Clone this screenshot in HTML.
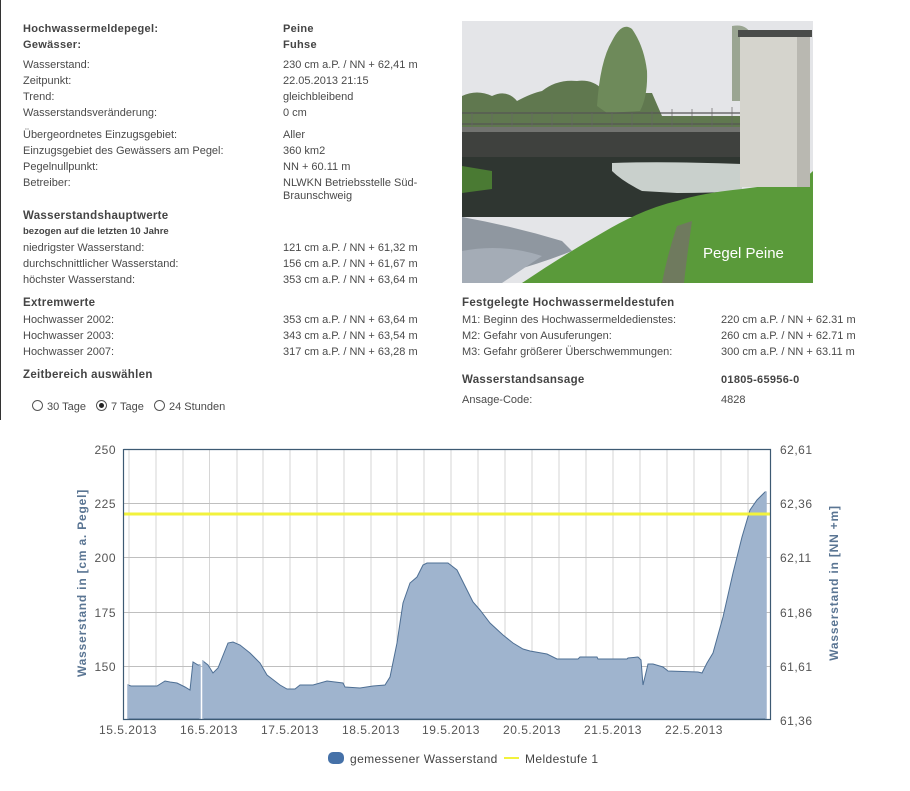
<!DOCTYPE html>
<html><head><meta charset="utf-8">
<style>
body{margin:0;background:#fff;width:910px;height:791px;position:relative;overflow:hidden;font-family:"Liberation Sans",Arial,sans-serif;font-size:11px;color:#4a4a4a}
.t{position:absolute;line-height:14px;white-space:nowrap}
.b{font-weight:bold;color:#444;letter-spacing:0.3px}
.h{font-weight:bold;color:#444;font-size:11.5px;letter-spacing:0.3px}
.s{font-weight:bold;font-size:9.5px;color:#444}
.r{position:absolute;width:11px;height:11px;border:1px solid #555;border-radius:50%;box-sizing:border-box;background:#fff}
</style></head><body>
<div style="position:absolute;left:0;top:0;width:1px;height:420px;background:#333"></div>

<div class="t b" style="left:23px;top:22px">Hochwassermeldepegel:</div><div class="t b" style="left:283px;top:22px">Peine</div>
<div class="t b" style="left:23px;top:38px">Gewässer:</div><div class="t b" style="left:283px;top:38px">Fuhse</div>
<div class="t" style="left:23px;top:58px">Wasserstand:</div><div class="t" style="left:283px;top:58px">230 cm a.P. / NN + 62,41 m</div>
<div class="t" style="left:23px;top:74px">Zeitpunkt:</div><div class="t" style="left:283px;top:74px">22.05.2013 21:15</div>
<div class="t" style="left:23px;top:90px">Trend:</div><div class="t" style="left:283px;top:90px">gleichbleibend</div>
<div class="t" style="left:23px;top:106px">Wasserstandsveränderung:</div><div class="t" style="left:283px;top:106px">0 cm</div>
<div class="t" style="left:23px;top:128px">Übergeordnetes Einzugsgebiet:</div><div class="t" style="left:283px;top:128px">Aller</div>
<div class="t" style="left:23px;top:144px">Einzugsgebiet des Gewässers am Pegel:</div><div class="t" style="left:283px;top:144px">360 km2</div>
<div class="t" style="left:23px;top:160px">Pegelnullpunkt:</div><div class="t" style="left:283px;top:160px">NN + 60.11 m</div>
<div class="t" style="left:23px;top:176px">Betreiber:</div><div class="t" style="left:283px;top:176px">NLWKN Betriebsstelle Süd-</div>
<div class="t" style="left:283px;top:189px">Braunschweig</div>
<div class="t h" style="left:23px;top:209px">Wasserstandshauptwerte</div>
<div class="t s" style="left:23px;top:225px">bezogen auf die letzten 10 Jahre</div>
<div class="t" style="left:23px;top:241px">niedrigster Wasserstand:</div><div class="t" style="left:283px;top:241px">121 cm a.P. / NN + 61,32 m</div>
<div class="t" style="left:23px;top:257px">durchschnittlicher Wasserstand:</div><div class="t" style="left:283px;top:257px">156 cm a.P. / NN + 61,67 m</div>
<div class="t" style="left:23px;top:273px">höchster Wasserstand:</div><div class="t" style="left:283px;top:273px">353 cm a.P. / NN + 63,64 m</div>
<div class="t h" style="left:23px;top:296px">Extremwerte</div>
<div class="t" style="left:23px;top:313px">Hochwasser 2002:</div><div class="t" style="left:283px;top:313px">353 cm a.P. / NN + 63,64 m</div>
<div class="t" style="left:23px;top:329px">Hochwasser 2003:</div><div class="t" style="left:283px;top:329px">343 cm a.P. / NN + 63,54 m</div>
<div class="t" style="left:23px;top:345px">Hochwasser 2007:</div><div class="t" style="left:283px;top:345px">317 cm a.P. / NN + 63,28 m</div>
<div class="t h" style="left:23px;top:368px">Zeitbereich auswählen</div>

<div class="r" style="left:32px;top:400px"></div><div class="t" style="left:47px;top:400px">30 Tage</div>
<div class="r" style="left:96px;top:400px"><div style="position:absolute;left:2px;top:2px;width:5px;height:5px;border-radius:50%;background:#222"></div></div><div class="t" style="left:111px;top:400px">7 Tage</div>
<div class="r" style="left:154px;top:400px"></div><div class="t" style="left:169px;top:400px">24 Stunden</div>

<div class="t h" style="left:462px;top:296px">Festgelegte Hochwassermeldestufen</div>
<div class="t" style="left:462px;top:313px">M1: Beginn des Hochwassermeldedienstes:</div><div class="t" style="left:721px;top:313px">220 cm a.P. / NN + 62.31 m</div>
<div class="t" style="left:462px;top:329px">M2: Gefahr von Ausuferungen:</div><div class="t" style="left:721px;top:329px">260 cm a.P. / NN + 62.71 m</div>
<div class="t" style="left:462px;top:345px">M3: Gefahr größerer Überschwemmungen:</div><div class="t" style="left:721px;top:345px">300 cm a.P. / NN + 63.11 m</div>
<div class="t h" style="left:462px;top:373px">Wasserstandsansage</div><div class="t b" style="left:721px;top:373px">01805-65956-0</div>
<div class="t" style="left:462px;top:393px">Ansage-Code:</div><div class="t" style="left:721px;top:393px">4828</div>

<svg style="position:absolute;left:462px;top:21px" width="351" height="262" viewBox="0 0 351 262">
<rect width="351" height="262" fill="#e4e5e8"/>
<path d="M0 75 Q15 68 30 75 Q45 68 55 80 Q70 72 80 70 Q95 58 115 60 Q130 58 140 68 L150 72 L190 72 L200 95 L280 95 L280 110 L0 110Z" fill="#60784f"/>
<path d="M135 85 Q138 40 150 20 Q160 0 170 8 Q182 25 185 50 Q186 75 178 90 L145 92Z" fill="#6e8a5a"/>
<path d="M270 5 Q285 2 290 15 L290 80 L270 80Z" fill="#9aa592"/>
<path d="M0 92 H280 M0 103 H280" stroke="#555" stroke-width="1.2"/>
<g stroke="#666" stroke-width="0.7"><path d="M10 92V106M30 92V106M50 92V106M70 92V106M90 92V106M110 92V106M130 92V106M150 92V106M170 92V106M190 90V106M210 88V106M230 88V106M250 87V106M270 86V106"/></g>
<rect x="0" y="106" width="280" height="30" fill="#3f413e"/>
<rect x="0" y="106" width="280" height="5" fill="#727370"/>
<rect x="0" y="136" width="280" height="60" fill="#2f3631"/>
<path d="M150 142 Q200 140 280 143 V170 Q250 172 215 172 L180 170 Q160 160 150 150Z" fill="#c9d0cc"/>
<path d="M0 145 L30 150 L30 168 L0 172Z" fill="#4a7a33"/>
<path d="M0 196 Q50 205 100 220 L110 230 Q60 250 0 262Z" fill="#8f97a0"/>
<path d="M0 230 Q40 222 80 235 L40 262 H0Z" fill="#a4acb6"/>
<path d="M60 262 Q100 235 140 212 Q180 188 215 180 Q240 172 280 168 L340 160 L351 150 V262Z" fill="#5a9a3a"/>
<path d="M200 262 Q205 235 215 205 L230 200 Q225 235 222 262Z" fill="#6f7a5e"/>
<rect x="278" y="11" width="70" height="155" fill="#d5d4cd"/>
<rect x="276" y="9" width="74" height="7" fill="#4a4c4a"/>
<rect x="335" y="16" width="13" height="150" fill="#b9b8b1"/>
<text x="241" y="237" font-family="Liberation Sans,Arial,sans-serif" font-size="15" fill="#fff">Pegel Peine</text>
</svg>

<svg style="position:absolute;left:0;top:430px" width="910" height="361" viewBox="0 430 910 361">
<g stroke="#d6d6d6" stroke-width="1">
<path d="M129 449V719M156 449V719M183 449V719M209.5 449V719M237 449V719M263 449V719M290 449V719M317 449V719M344 449V719M371 449V719M397 449V719M424 449V719M451 449V719M478 449V719M505 449V719M532 449V719M559 449V719M586 449V719M613 449V719M640 449V719M667 449V719M694 449V719M721 449V719M748 449V719"/>
</g>
<g stroke="#bfbfbf" stroke-width="1"><path d="M123 503.5H771M123 557.5H771M123 612.5H771M123 666.5H771"/></g>
<path d="M128 719 V685 L131 686 L157 686 L165 681 L170 682 L177 683 L185 687 L190 690 L193 662 L198 665 L200 665 V719Z M203 719 V661 L208 665 L213 673 L218 668 L228 643 L233 642 L240 645 L250 653 L260 663 L267 675 L280 685 L287 689 L295 689 L300 685 L313 685 L327 681 L343 683 L345 687 L360 688 L373 686 L385 685 L390 677 L397 643 L403 603 L410 583 L417 577 L423 565 L427 563 L448 563 L457 570 L467 590 L473 602 L480 610 L490 623 L503 635 L513 643 L523 649 L530 651 L547 654 L557 659 L578 659 L580 657 L597 657 L598 659 L627 659 L628 658 L638 657 L641 660 L643 685 L648 664 L653 664 L663 667 L668 671 L698 672 L702 673 L707 663 L713 653 L723 617 L733 573 L742 537 L750 510 L757 500 L765 492 L766 492 V719Z" fill="#9fb4ce" stroke="#4e6f94" stroke-width="1"/>
<path d="M128 719V685M200 719V665M203 719V661M766 719V492" stroke="#9fb4ce" stroke-width="1.5"/>
<path d="M123 514H771" stroke="#f2f23c" stroke-width="3"/>
<path d="M123.5 449V719.5H770.5V449.5H123.5" fill="none" stroke="#3d5a73" stroke-width="1.2"/>
<g font-family="Liberation Sans,Arial,sans-serif" font-size="12" fill="#555" text-anchor="end" letter-spacing="0.5">
<text x="116" y="454">250</text><text x="116" y="508">225</text><text x="116" y="562">200</text><text x="116" y="617">175</text><text x="116" y="671">150</text>
</g>
<g font-family="Liberation Sans,Arial,sans-serif" font-size="12" fill="#555" letter-spacing="0.5">
<text x="780" y="454">62,61</text><text x="780" y="508">62,36</text><text x="780" y="562">62,11</text><text x="780" y="617">61,86</text><text x="780" y="671">61,61</text><text x="780" y="725">61,36</text>
</g>
<g font-family="Liberation Sans,Arial,sans-serif" font-size="12" fill="#555" text-anchor="middle" letter-spacing="0.5">
<text x="128" y="734">15.5.2013</text><text x="209" y="734">16.5.2013</text><text x="290" y="734">17.5.2013</text><text x="371" y="734">18.5.2013</text><text x="451" y="734">19.5.2013</text><text x="532" y="734">20.5.2013</text><text x="613" y="734">21.5.2013</text><text x="694" y="734">22.5.2013</text>
</g>
<text transform="translate(86,583) rotate(-90)" text-anchor="middle" font-family="Liberation Sans,Arial,sans-serif" font-size="12" font-weight="bold" fill="#5a7593" letter-spacing="0.8">Wasserstand in [cm a. Pegel]</text>
<text transform="translate(838,583) rotate(-90)" text-anchor="middle" font-family="Liberation Sans,Arial,sans-serif" font-size="12" font-weight="bold" fill="#5a7593" letter-spacing="0.8">Wasserstand in [NN +m]</text>
<rect x="328" y="752" width="16" height="12" rx="5" fill="#4571a8"/>
<text x="350" y="763" font-family="Liberation Sans,Arial,sans-serif" font-size="12" fill="#444" letter-spacing="0.4">gemessener Wasserstand</text>
<path d="M504 758H519" stroke="#f2f23c" stroke-width="2"/>
<text x="525" y="763" font-family="Liberation Sans,Arial,sans-serif" font-size="12" fill="#444" letter-spacing="0.4">Meldestufe 1</text>
</svg>
</body></html>
